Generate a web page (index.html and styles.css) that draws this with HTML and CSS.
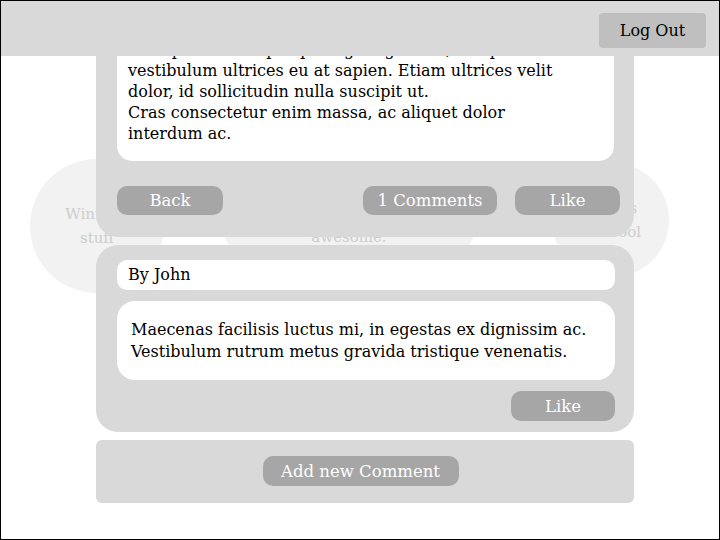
FILE: index.html
```html
<!DOCTYPE html>
<html lang="en">
<head>
    <meta charset="UTF-8">
    <title>Post - Comments</title>
    <link rel="stylesheet" href="styles.css">
</head>
<body>

    <div class="screen">

        <!-- background bubbles -->
        <div class="bubble bubble-left">Winning<br>stuff</div>
        <div class="bubble bubble-middle">This is<br>awesome.</div>
        <div class="bubble bubble-right">Circles<br>are cool</div>

        <div class="topbar">
            <button class="logout">Log Out</button>
        </div>

        <div class="feed">
            <div class="panel post">
                <div class="post-body">
                    Nam posuere turpis quis ligula gravida, nec pretium<br>
                    vestibulum ultrices eu at sapien. Etiam ultrices velit<br>
                    dolor, id sollicitudin nulla suscipit ut.<br>
                    Cras consectetur enim massa, ac aliquet dolor<br>
                    interdum ac.
                </div>
                <div class="post-actions">
                    <button class="btn btn-back">Back</button>
                    <span class="spacer"></span>
                    <button class="btn btn-comments">1 Comments</button>
                    <button class="btn btn-like">Like</button>
                </div>
            </div>

            <div class="panel comment">
                <div class="comment-author">By John</div>
                <div class="comment-body">
                    Maecenas facilisis luctus mi, in egestas ex dignissim ac.<br>
                    Vestibulum rutrum metus gravida tristique venenatis.
                </div>
                <div class="comment-actions">
                    <button class="btn btn-like-small">Like</button>
                </div>
            </div>

            <div class="panel add-comment">
                <button class="btn btn-add">Add new Comment</button>
            </div>
        </div>

    </div>

</body>
</html>
```

FILE: styles.css
```css
/* Global styles */
body {
    margin: 0;
    font-family: "DejaVu Serif", serif;
    color: #000;
}

.screen {
    position: relative;
    width: 720px;
    height: 540px;
    box-sizing: border-box;
    border: 1px solid #000;
    overflow: hidden;
    background-color: #fff;
}

button {
    font-family: inherit;
    border: none;
    cursor: pointer;
}

/* Background bubbles */
.bubble {
    position: absolute;
    display: flex;
    align-items: center;
    justify-content: center;
    text-align: center;
    background-color: #f2f2f2;
    color: #cdcdcd;
    font-size: 15px;
    line-height: 24px;
    border-radius: 50%;
}

.bubble-left {
    left: 29px;
    top: 158px;
    width: 134px;
    height: 134px;
}

.bubble-middle {
    left: 222px;
    top: 155px;
    width: 252px;
    height: 138px;
}

.bubble-right {
    left: 551px;
    top: 161px;
    width: 117px;
    height: 116px;
    justify-content: flex-end;
    padding-right: 28px;
    box-sizing: border-box;
}

/* Top bar */
.topbar {
    position: absolute;
    top: 0;
    left: 0;
    right: 0;
    height: 55px;
    display: flex;
    justify-content: flex-end;
    align-items: center;
    padding-right: 13px;
    background-color: #d9d9d9;
    z-index: 3;
}

.logout {
    width: 107px;
    height: 35px;
    margin-top: 3px;
    background-color: #bfbfbf;
    border-radius: 4px;
    color: #000;
    font-size: 16px;
}

/* Feed */
.feed {
    position: relative;
    z-index: 1;
    width: 538px;
    margin-top: 1px;
    margin-left: 95px;
    display: flex;
    flex-direction: column;
    gap: 8px;
}

.panel {
    background-color: #d9d9d9;
}

.post {
    padding: 21px 20px 22px 21px;
    border-radius: 0 0 22px 22px;
}

.post-body {
    background-color: #fff;
    border-radius: 15px;
    padding: 16px 12px 17px 11px;
    font-size: 16px;
    line-height: 21px;
}

.post-actions {
    display: flex;
    gap: 18px;
    margin-top: 25px;
    margin-right: -6px;
}

.spacer {
    flex: 1;
}

.btn {
    height: 29px;
    background-color: #a6a6a6;
    color: #fff;
    border-radius: 10px;
    font-size: 16.5px;
}

.btn-back {
    width: 106px;
}

.btn-comments {
    width: 134px;
}

.btn-like {
    width: 105px;
}

/* Comment */
.comment {
    padding: 15px 19px 11px 21px;
    border-radius: 22px;
}

.comment-author {
    height: 30px;
    line-height: 30px;
    padding-left: 11px;
    background-color: #fff;
    border-radius: 10px;
    font-size: 16px;
}

.comment-body {
    margin-top: 11px;
    padding: 18px 13px 17px 14px;
    background-color: #fff;
    border-radius: 18px;
    font-size: 16px;
    line-height: 22px;
}

.comment-actions {
    display: flex;
    justify-content: flex-end;
    margin-top: 11px;
}

.btn-like-small {
    width: 104px;
    height: 30px;
}

/* Add comment */
.add-comment {
    display: flex;
    justify-content: center;
    padding: 16px 9px 17px 0;
    border-radius: 6px;
}

.btn-add {
    width: 196px;
    height: 30px;
}
```
